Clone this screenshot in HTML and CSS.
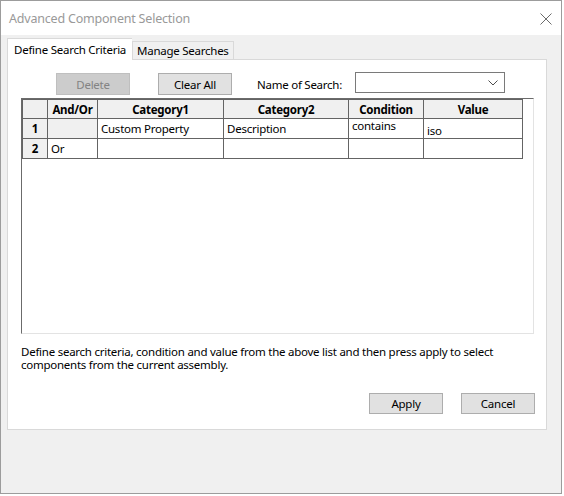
FILE: index.html
```html
<!DOCTYPE html>
<html lang="en">
<head>
    <meta charset="UTF-8">
    <title>Advanced Component Selection</title>
    <link rel="stylesheet" href="styles.css">
</head>
<body>
    <div class="window">
        <div class="titlebar">
            <span class="title">Advanced Component Selection</span>
            <svg class="close" width="12" height="12" viewBox="0 0 12 12">
                <path d="M0.5 0.5 L11.5 11.5 M11.5 0.5 L0.5 11.5" stroke="#6b6b6b" stroke-width="1" fill="none"/>
            </svg>
        </div>
        <div class="content">
            <div class="tabs">
                <div class="tab active">Define Search Criteria</div>
                <div class="tab">Manage Searches</div>
            </div>
            <div class="panel">
                <div class="toolbar">
                    <button class="btn disabled" disabled>Delete</button>
                    <button class="btn clear">Clear All</button>
                    <label class="name-label" for="search-name">Name of Search:</label>
                    <div class="combo" id="search-name">
                        <svg width="10" height="6" viewBox="0 0 10 6">
                            <path d="M0.5 0.5 L5 5 L9.5 0.5" stroke="#4d4d4d" stroke-width="1" fill="none"/>
                        </svg>
                    </div>
                </div>

                <div class="grid">
                    <table>
                        <colgroup>
                            <col style="width:25px">
                            <col style="width:50px">
                            <col style="width:126px">
                            <col style="width:125px">
                            <col style="width:75px">
                            <col style="width:99px">
                        </colgroup>
                        <tr class="head">
                            <th></th>
                            <th>And/Or</th>
                            <th>Category1</th>
                            <th>Category2</th>
                            <th>Condition</th>
                            <th>Value</th>
                        </tr>
                        <tr>
                            <th>1</th>
                            <td class="locked"></td>
                            <td>Custom Property</td>
                            <td>Description</td>
                            <td class="top">contains</td>
                            <td class="low">iso</td>
                        </tr>
                        <tr>
                            <th>2</th>
                            <td>Or</td>
                            <td></td>
                            <td></td>
                            <td></td>
                            <td></td>
                        </tr>
                    </table>
                </div>

                <p class="hint">Define search criteria, condition and value from the above list and then press apply to select components from the current assembly.</p>

                <div class="actions">
                    <button class="btn">Apply</button>
                    <button class="btn">Cancel</button>
                </div>
            </div>
        </div>
    </div>
</body>
</html>
```

FILE: styles.css
```css
body {
    margin: 0;
    background: #fff;
    font-family: "Noto Sans", sans-serif;
    font-size: 11.5px;
    letter-spacing: -0.25px;
    color: #000;
}
.window {
    width: 560px;
    height: 492px;
    border: 1px solid #9c9c9c;
    display: flex;
    flex-direction: column;
}
.titlebar {
    height: 34px;
    background: #fff;
    display: flex;
    align-items: center;
    justify-content: space-between;
    padding: 1px 9px 0 8px;
    box-sizing: border-box;
}
.title {
    color: #999;
    font-size: 12.5px;
    letter-spacing: -0.2px;
}
.content {
    flex: 1;
    background: #f0f0f0;
    padding: 3px 0 0 6px;
}
.tabs {
    display: flex;
    align-items: flex-end;
    height: 21px;
}
.tab {
    height: 18px;
    line-height: 17px;
    padding: 0 4px;
    border: 1px solid #d9d9d9;
    border-bottom: none;
    background: #f0f0f0;
    box-sizing: border-box;
    white-space: nowrap;
}
.tab.active {
    height: 22px;
    line-height: 22px;
    width: 125px;
    padding: 0 6px;
    background: #fff;
    margin-bottom: -1px;
    position: relative;
    z-index: 1;
    border-right: none;
}
.panel {
    width: 540px;
    height: 371px;
    background: #fff;
    border: 1px solid #d9d9d9;
    box-sizing: border-box;
    display: flex;
    flex-direction: column;
}
.toolbar {
    display: flex;
    align-items: flex-start;
    height: 23px;
    margin-top: 12px;
    padding-left: 48px;
}
.btn {
    width: 74px;
    height: 22px;
    margin-top: 1px;
    background: #e1e1e1;
    border: 1px solid #adadad;
    font-family: inherit;
    font-size: 11.5px;
    letter-spacing: -0.25px;
    color: #000;
    padding: 0;
}
.btn.disabled {
    background: #cccccc;
    border-color: #bfbfbf;
    color: #838383;
}
.btn.clear {
    margin-left: 28px;
}
.name-label {
    margin: 5px 0 0 25px;
    width: 98px;
}
.combo {
    width: 150px;
    height: 21px;
    border: 1px solid #7a7a7a;
    box-sizing: border-box;
    display: flex;
    align-items: center;
    justify-content: flex-end;
    padding-right: 6px;
}
.grid {
    width: 513px;
    height: 236px;
    margin: 3px 0 0 13px;
    border-top: 1px solid #6b6b6b;
    border-left: 1px solid #6b6b6b;
    border-right: 1px solid #e3e3e3;
    border-bottom: 1px solid #e3e3e3;
    box-sizing: border-box;
}
table {
    border-collapse: collapse;
    table-layout: fixed;
    width: 501px;
}
th, td {
    border: 1px solid #646464;
    height: 20px;
    padding: 0 3px;
    box-sizing: border-box;
    white-space: nowrap;
    overflow: hidden;
}
th {
    background: #f0f0f0;
    font-weight: bold;
    text-align: center;
}
tr.head th {
    height: 19px;
}
td {
    text-align: left;
}
td.locked {
    background: #f0f0f0;
}
td.top {
    vertical-align: top;
    line-height: 14px;
}
td.low {
    padding-top: 3px;
}
.hint {
    margin: 11px 12px 0 13px;
    line-height: 13px;
}
.actions {
    display: flex;
    justify-content: flex-end;
    gap: 18px;
    margin: 22px 11px 0 0;
}
.actions .btn {
    margin-top: 0;
    height: 21px;
}
```
